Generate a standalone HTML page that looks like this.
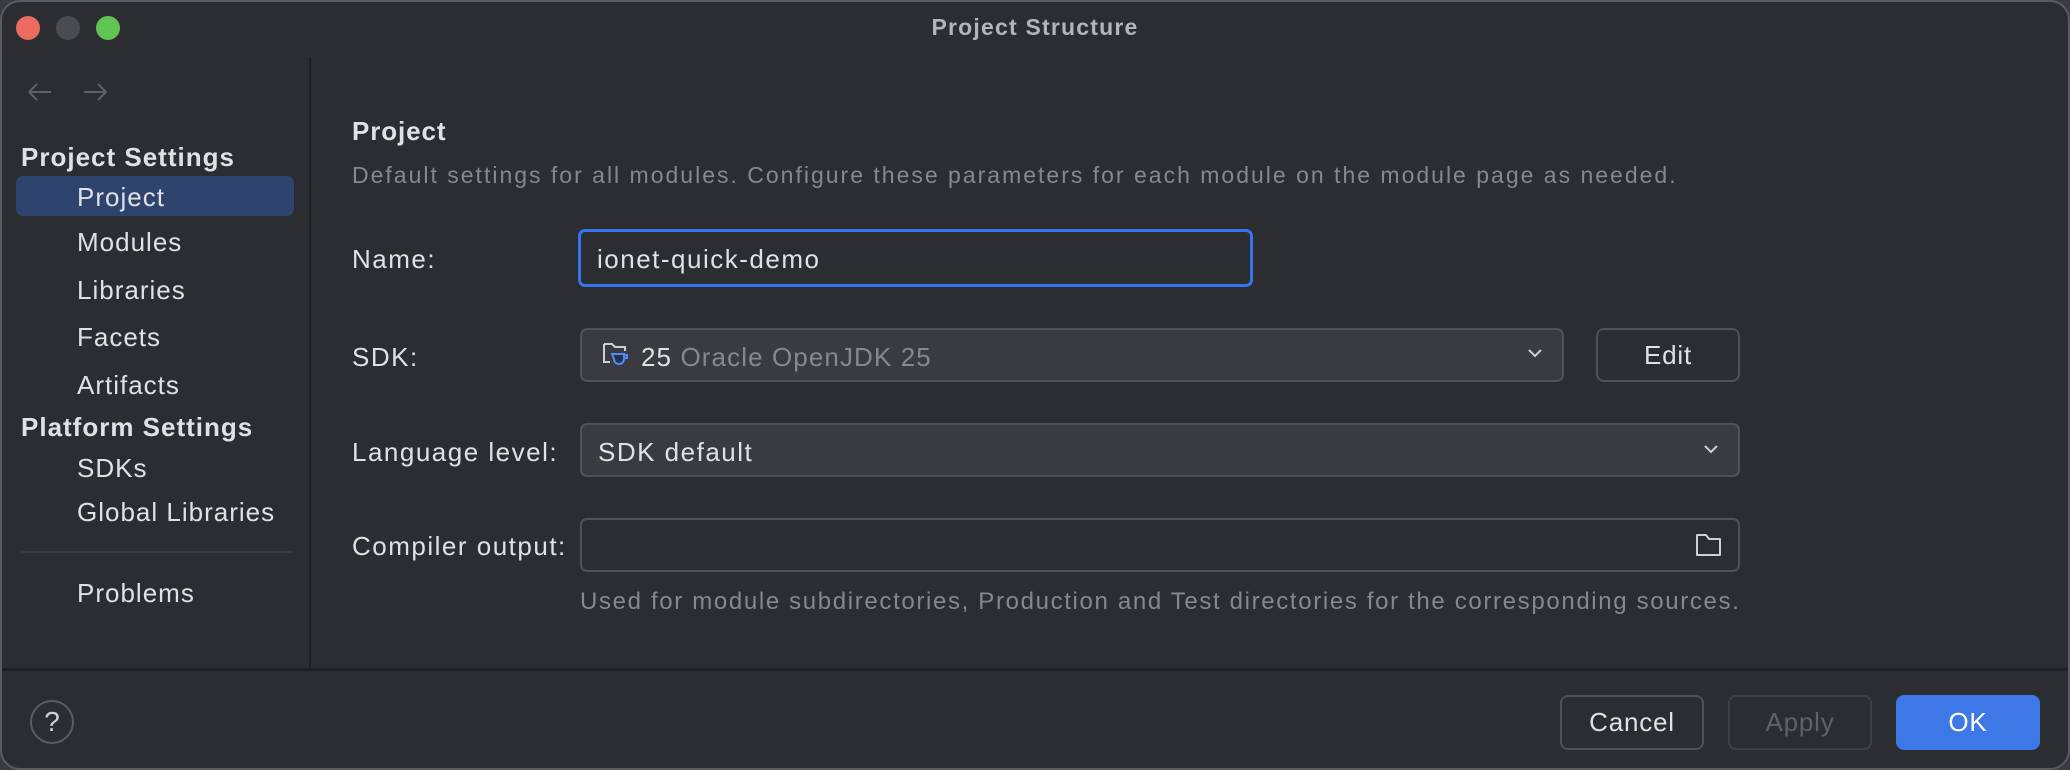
<!DOCTYPE html>
<html><head><meta charset="utf-8"><style>
*{margin:0;padding:0;box-sizing:border-box}
html,body{width:2070px;height:770px;overflow:hidden;background:#3a3b3e;font-family:"Liberation Sans",sans-serif}
.win{position:absolute;left:0;top:0;width:2070px;height:770px;background:#2b2d30;border:2px solid #5a5b5e;border-radius:20px;overflow:hidden}
.in{position:absolute;left:-4px;top:-3px;width:2070px;height:770px}
.a{position:absolute;white-space:nowrap}
.dot{position:absolute;width:24px;height:24px;border-radius:50%;top:17px}
.t{color:#dfe1e5;font-size:26px;letter-spacing:1.5px}
.side{color:#dfe1e5;font-size:26px;letter-spacing:1px}
.box{position:absolute;border-radius:7px}
.btn{position:absolute;border:2px solid #4e5157;border-radius:8px;color:#dfe1e5;font-size:26px;text-align:center;line-height:50px;letter-spacing:0.8px}
</style></head><body><div class="win"><div class="in">
<div class="dot" style="left:18px;background:#ec6a5e"></div>
<div class="dot" style="left:58px;background:#4b4c4f"></div>
<div class="dot" style="left:98px;background:#61c554"></div>
<div class="a" style="left:0;width:2074px;text-align:center;top:15px;color:#b4b5b8;font-size:23px;font-weight:bold;letter-spacing:1.2px">Project Structure</div>
<div class="a" style="left:311px;top:58px;width:2px;height:612px;background:#1e1f22"></div>
<div class="a" style="left:0;top:669px;width:2074px;height:3px;background:#1e1f22"></div>
<svg class="a" style="left:28px;top:82px" width="90" height="22"><path d="M3 11h22M3 11l8-8M3 11l8 8M58 11h22M80 11l-8-8M80 11l-8 8" stroke="#5f6166" stroke-width="2" fill="none"/></svg>
<div class="a side" style="left:23px;top:143px;font-weight:bold">Project Settings</div>
<div class="box" style="left:18px;top:177px;width:278px;height:40px;background:#2e436e"></div>
<div class="a side" style="left:79px;top:183px">Project</div>
<div class="a side" style="left:79px;top:228px">Modules</div>
<div class="a side" style="left:79px;top:276px">Libraries</div>
<div class="a side" style="left:79px;top:323px">Facets</div>
<div class="a side" style="left:79px;top:371px">Artifacts</div>
<div class="a side" style="left:23px;top:413px;font-weight:bold">Platform Settings</div>
<div class="a side" style="left:79px;top:454px">SDKs</div>
<div class="a side" style="left:79px;top:498px">Global Libraries</div>
<div class="a" style="left:23px;top:552px;width:272px;height:2px;background:#393b40"></div>
<div class="a side" style="left:79px;top:579px">Problems</div>
<div class="a t" style="left:354px;top:117px;font-weight:bold;font-size:26px;letter-spacing:0.9px">Project</div>
<div class="a" style="left:354px;top:163px;color:#86888d;font-size:23px;letter-spacing:2px">Default settings for all modules. Configure these parameters for each module on the module page as needed.</div>
<div class="a t" style="left:354px;top:245px">Name:</div>
<div class="box" style="left:580px;top:230px;width:675px;height:58px;border:3px solid #3574f0;background:#2b2d30"></div>
<div class="a t" style="left:599px;top:245px">ionet-quick-demo</div>
<div class="a t" style="left:354px;top:343px">SDK:</div>
<div class="box" style="left:582px;top:329px;width:984px;height:54px;border:2px solid #4e5157;background:#393b40"></div>
<svg class="a" style="left:604px;top:341px" width="30" height="30"><path d="M2 4h8l3 3h10v4M2 4v18h6" stroke="#ced0d6" stroke-width="2" fill="none"/><path d="M10 14h12v5a5 5 0 0 1-10 0zM22 15h3v3h-3" stroke="#548af7" stroke-width="2" fill="#25324d"/></svg>
<div class="a t" style="left:643px;top:343px;letter-spacing:1.1px">25 <span style="color:#86888d">Oracle OpenJDK 25</span></div>
<svg class="a" style="left:1528px;top:347px" width="18" height="14"><path d="M3 4l6 6 6-6" stroke="#ced0d6" stroke-width="2" fill="none"/></svg>
<div class="btn" style="left:1598px;top:329px;width:144px;height:54px">Edit</div>
<div class="a t" style="left:354px;top:438px">Language level:</div>
<div class="box" style="left:582px;top:424px;width:1160px;height:54px;border:2px solid #4e5157;background:#393b40"></div>
<div class="a t" style="left:600px;top:438px">SDK default</div>
<svg class="a" style="left:1704px;top:443px" width="18" height="14"><path d="M3 4l6 6 6-6" stroke="#ced0d6" stroke-width="2" fill="none"/></svg>
<div class="a t" style="left:354px;top:532px">Compiler output:</div>
<div class="box" style="left:582px;top:519px;width:1160px;height:54px;border:2px solid #4e5157;background:#2b2d30"></div>
<svg class="a" style="left:1696px;top:533px" width="30" height="26"><path d="M3 3h9l3 4h11v16H3z" stroke="#ced0d6" stroke-width="2" fill="none" stroke-linejoin="round"/></svg>
<div class="a" style="left:582px;top:589px;color:#86888d;font-size:24px;letter-spacing:1.65px">Used for module subdirectories, Production and Test directories for the corresponding sources.</div>
<div class="a" style="left:32px;top:701px;width:44px;height:44px;border:2px solid #5a5c60;border-radius:50%;color:#ced0d6;font-size:28px;text-align:center;line-height:40px">?</div>
<div class="btn" style="left:1562px;top:696px;width:144px;height:55px">Cancel</div>
<div class="btn" style="left:1730px;top:696px;width:144px;height:55px;border-color:#3e4045;color:#5f6166">Apply</div>
<div class="btn" style="left:1898px;top:696px;width:144px;height:55px;border:none;background:#3d78e6;color:#fff;line-height:55px">OK</div>
</div></div></body></html>
